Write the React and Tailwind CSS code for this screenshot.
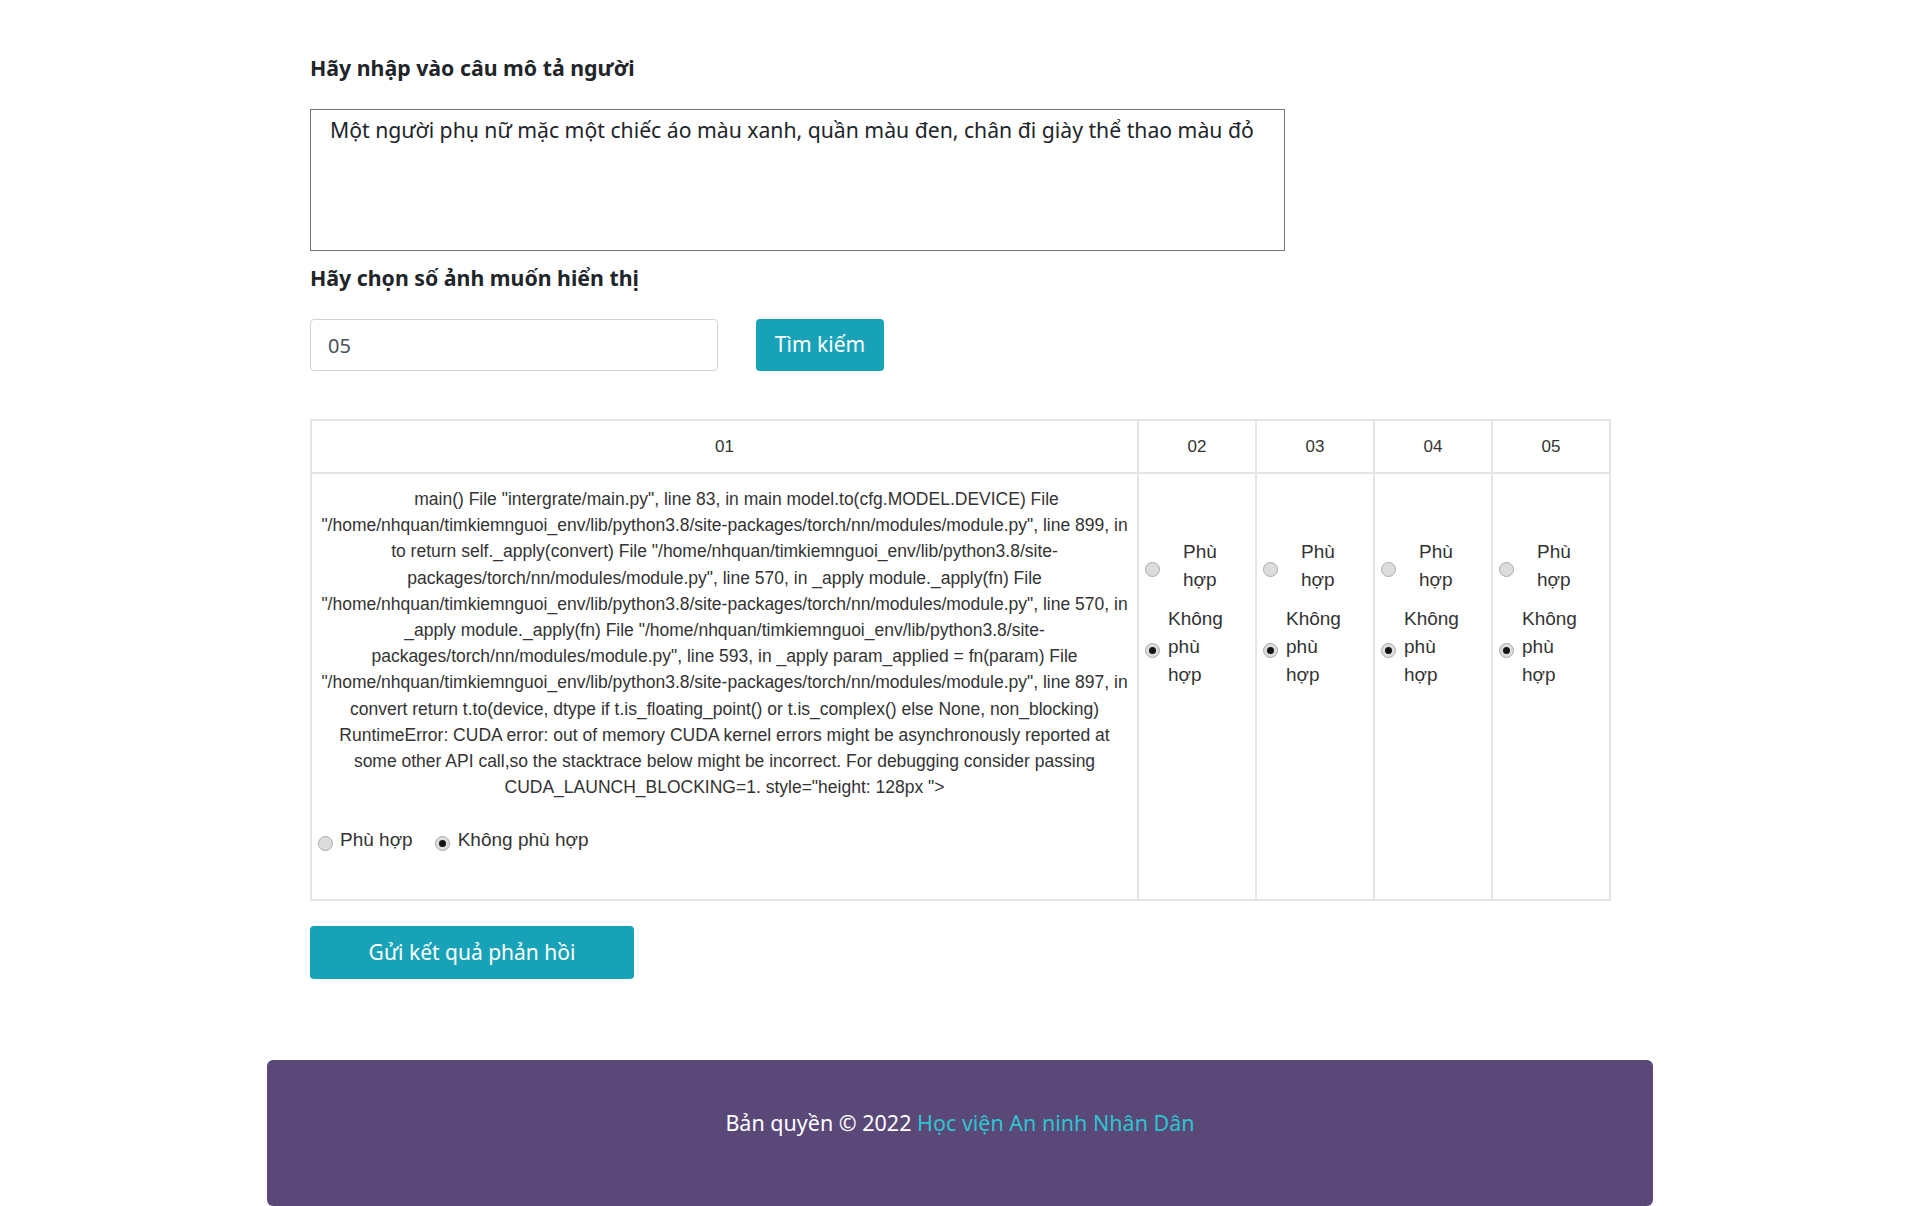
import React from "react";

const SEGOE = "font-['Noto_Sans',sans-serif]";
const ARIAL = "font-['Liberation_Sans',Arial,sans-serif]";

const ERROR_LINES = [
  'main() File "intergrate/main.py", line 83, in main model.to(cfg.MODEL.DEVICE) File',
  '"/home/nhquan/timkiemnguoi_env/lib/python3.8/site-packages/torch/nn/modules/module.py", line 899, in',
  'to return self._apply(convert) File "/home/nhquan/timkiemnguoi_env/lib/python3.8/site-',
  'packages/torch/nn/modules/module.py", line 570, in _apply module._apply(fn) File',
  '"/home/nhquan/timkiemnguoi_env/lib/python3.8/site-packages/torch/nn/modules/module.py", line 570, in',
  '_apply module._apply(fn) File "/home/nhquan/timkiemnguoi_env/lib/python3.8/site-',
  'packages/torch/nn/modules/module.py", line 593, in _apply param_applied = fn(param) File',
  '"/home/nhquan/timkiemnguoi_env/lib/python3.8/site-packages/torch/nn/modules/module.py", line 897, in',
  "convert return t.to(device, dtype if t.is_floating_point() or t.is_complex() else None, non_blocking)",
  "RuntimeError: CUDA error: out of memory CUDA kernel errors might be asynchronously reported at",
  "some other API call,so the stacktrace below might be incorrect. For debugging consider passing",
  'CUDA_LAUNCH_BLOCKING=1. style="height: 128px ">',
];

const Radio = ({ checked }) => (
  <span className="flex h-[15px] w-[15px] shrink-0 items-center justify-center rounded-full border border-[#ababab] bg-[#dcdcdc]">
    {checked && <span className="h-[7px] w-[7px] rounded-full bg-[#151515]" />}
  </span>
);

// narrow result cells: labels wrap word by word
const SmallChoice = () => (
  <div className="flex flex-col gap-[11px] pl-[6px] pt-[64px] text-[19px] leading-[28px] text-[#333]">
    <div className="flex items-center gap-[8px]">
      <span className="mt-[6px]">
        <Radio />
      </span>
      <span className="pl-[15px]">
        Phù
        <br />
        hợp
      </span>
    </div>
    <div className="flex items-center gap-[8px]">
      <span className="mt-[6px]">
        <Radio checked />
      </span>
      <span>
        Không
        <br />
        phù
        <br />
        hợp
      </span>
    </div>
  </div>
);

const App = () => {
  const headers = ["01", "02", "03", "04", "05"];

  return (
    <div className={`min-h-[1206px] bg-white ${SEGOE}`}>
      <div className="mx-auto w-[1300px] pt-[55px]">
        <h2 className="text-[21.3px] font-bold leading-[25px] text-[#212529]">
          Hãy nhập vào câu mô tả người
        </h2>
        <textarea
          className="mt-[29px] block h-[142px] w-[975px] resize-none border border-[#767676] px-[19px] pt-[5px] text-[21.2px] leading-[30px] text-[#212529] outline-none"
          defaultValue="Một người phụ nữ mặc một chiếc áo màu xanh, quần màu đen, chân đi giày thể thao màu đỏ"
        />

        <h2 className="mt-[14px] text-[21.3px] font-bold leading-[25px] text-[#212529]">
          Hãy chọn số ảnh muốn hiển thị
        </h2>
        <div className="mt-[29px] flex gap-[38px]">
          <input
            className="h-[52px] w-[408px] rounded-[4px] border border-[#ced4da] px-[17px] text-[20px] text-[#495057] outline-none"
            defaultValue="05"
          />
          <button className="h-[52px] w-[128px] rounded-[4px] bg-[#17a2b8] text-[21px] text-white">
            Tìm kiếm
          </button>
        </div>

        <table className={`mt-[48px] w-[1299px] table-fixed border-collapse ${ARIAL} text-[#333]`}>
          <colgroup>
            <col className="w-[827px]" />
            <col className="w-[118px]" />
            <col className="w-[118px]" />
            <col className="w-[118px]" />
            <col className="w-[118px]" />
          </colgroup>
          <thead>
            <tr>
              {headers.map((h) => (
                <th
                  key={h}
                  className="h-[53px] border-2 border-[#e3e5e8] text-center text-[17px] font-normal"
                >
                  {h}
                </th>
              ))}
            </tr>
          </thead>
          <tbody>
            <tr>
              <td className="h-[427px] border-2 border-[#e3e5e8] px-[6px] pt-[12px] align-top">
                <div className="text-center text-[17.5px] leading-[26.2px]">
                  {ERROR_LINES.map((line, i) => (
                    <div
                      key={i}
                      className={`whitespace-nowrap ${i === 0 ? "pl-[24px]" : ""}`}
                    >
                      {line}
                    </div>
                  ))}
                </div>
                <div className="mt-[27px] flex items-center text-[19px] leading-[26px]">
                  <span className="mt-[6px]">
                    <Radio />
                  </span>
                  <span className="ml-[7px]">Phù hợp</span>
                  <span className="ml-[22px] mt-[6px]">
                    <Radio checked />
                  </span>
                  <span className="ml-[8px]">Không phù hợp</span>
                </div>
              </td>
              {headers.slice(1).map((h) => (
                <td key={h} className="border-2 border-[#e3e5e8] align-top">
                  <SmallChoice />
                </td>
              ))}
            </tr>
          </tbody>
        </table>

        <button className="mt-[25px] h-[53px] w-[324px] rounded-[4px] bg-[#17a2b8] text-[21px] text-white">
          Gửi kết quả phản hồi
        </button>
      </div>

      <footer className="mx-auto mt-[81px] h-[146px] w-[1386px] rounded-[6px] bg-[#5a4879] pt-[48px] text-center text-[21.5px] leading-[30px] text-white">
        Bản quyền © 2022{" "}
        <a href="#" className="text-[#2ec4cf]">
          Học viện An ninh Nhân Dân
        </a>
      </footer>
    </div>
  );
};

export default App;
